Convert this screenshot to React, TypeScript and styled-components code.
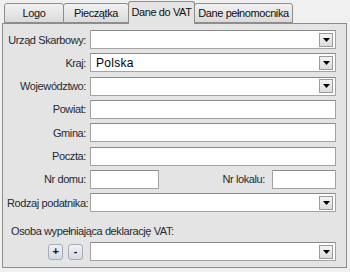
import React from 'react';
import styled, { createGlobalStyle } from 'styled-components';

const GlobalStyle = createGlobalStyle`
  html, body {
    margin: 0;
    padding: 0;
    background: #f0f0f0;
    font-family: "Liberation Sans", Arial, sans-serif;
    font-size: 11px;
    letter-spacing: -0.4px;
    color: #1e1e1e;
  }
`;

const Window = styled.div`
  width: 350px;
  height: 272px;
  box-sizing: border-box;
  padding: 1px 3px 0 2px;
  background: #f0f0f0;
  display: flex;
  flex-direction: column;
`;

const TabBar = styled.div`
  display: flex;
  align-items: flex-end;
  height: 22px;
  padding-left: 2px;
  position: relative;
  z-index: 1;
`;

const Tab = styled.div<{ $active?: boolean; $width: number }>`
  width: ${p => p.$width}px;
  box-sizing: border-box;
  height: ${p => (p.$active ? 23 : 20)}px;
  margin-bottom: ${p => (p.$active ? -1 : 0)}px;
  border: 1px solid #8d8d8d;
  border-bottom: ${p => (p.$active ? 'none' : '1px solid #8d8d8d')};
  border-radius: 3px 3px 0 0;
  background: ${p =>
    p.$active ? '#e4e4e4' : 'linear-gradient(#f2f2f2, #dadada)'};
  display: flex;
  align-items: center;
  justify-content: center;
  white-space: nowrap;
  padding-bottom: ${p => (p.$active ? 2 : 0)}px;
  color: #111;
  margin-left: -1px;
  &:first-child {
    margin-left: 0;
  }
`;

const Panel = styled.div`
  flex: none;
  height: 245px;
  box-sizing: border-box;
  border: 1px solid #8d8d8d;
  background: #e4e4e4;
  padding: 6px 10px 0 4px;
`;

const Form = styled.div`
  display: grid;
  grid-template-columns: 79px 1fr;
  column-gap: 4px;
  row-gap: 4.33px;
  align-items: center;
`;

const Label = styled.label`
  text-align: right;
  white-space: nowrap;
  color: #262a30;
`;

const Field = styled.div<{ $width?: number }>`
  height: 19px;
  box-sizing: border-box;
  width: ${p => (p.$width ? `${p.$width}px` : 'auto')};
  border: 1px solid #a3a3a3;
  border-top-color: #8a8a8a;
  background: #fff;
  display: flex;
  align-items: center;
  padding: 0 2px 0 5px;
`;

const FieldText = styled.span`
  flex: 1;
  font-size: 12px;
  letter-spacing: 0.3px;
  color: #000;
`;

const DropButton = styled.div`
  width: 14px;
  height: 14px;
  box-sizing: border-box;
  border: 1px solid #9a9a9a;
  background: linear-gradient(#f4f4f4, #dcdcdc);
  display: flex;
  align-items: center;
  justify-content: center;
`;

const SplitRow = styled.div`
  display: flex;
  align-items: center;
  justify-content: space-between;
`;

const SplitLabel = styled(Label)`
  margin-left: auto;
  margin-right: 7px;
`;

const Section = styled.div`
  margin-top: 13px;
  padding-left: 4px;
  color: #262a30;
`;

const PersonRow = styled.div`
  display: grid;
  grid-template-columns: 79px 1fr;
  column-gap: 4px;
  align-items: center;
  margin-top: 5px;
`;

const Buttons = styled.div`
  display: flex;
  justify-content: flex-end;
  gap: 5px;
  padding-right: 3px;
`;

const SmallButton = styled.div`
  width: 15px;
  height: 16px;
  box-sizing: border-box;
  border: 1px solid #a6acb5;
  border-radius: 3px;
  background: linear-gradient(#eef1f5, #d5dae2);
  display: flex;
  align-items: center;
  justify-content: center;
  font-weight: bold;
  font-size: 11px;
  color: #111;
  line-height: 1;
`;

const Arrow = () => (
  <svg width="7" height="4" viewBox="0 0 7 4">
    <path d="M0 0 H7 L3.5 4 Z" fill="#000" />
  </svg>
);

const Combo = ({ value }: { value?: string }) => (
  <Field>
    <FieldText>{value}</FieldText>
    <DropButton>
      <Arrow />
    </DropButton>
  </Field>
);

export default function App() {
  return (
    <>
      <GlobalStyle />
      <Window>
        <TabBar>
          <Tab $width={60}>Logo</Tab>
          <Tab $width={66}>Pieczątka</Tab>
          <Tab $width={67} $active>Dane do VAT</Tab>
          <Tab $width={99}>Dane pełnomocnika</Tab>
        </TabBar>
        <Panel>
          <Form>
            <Label>Urząd Skarbowy:</Label>
            <Combo />
            <Label>Kraj:</Label>
            <Combo value="Polska" />
            <Label>Województwo:</Label>
            <Combo />
            <Label>Powiat:</Label>
            <Field />
            <Label>Gmina:</Label>
            <Field />
            <Label>Poczta:</Label>
            <Field />
            <Label>Nr domu:</Label>
            <SplitRow>
              <Field $width={69} />
              <SplitLabel>Nr lokalu:</SplitLabel>
              <Field $width={64} />
            </SplitRow>
            <Label>Rodzaj podatnika:</Label>
            <Combo />
          </Form>
          <Section>Osoba wypełniająca deklarację VAT:</Section>
          <PersonRow>
            <Buttons>
              <SmallButton>+</SmallButton>
              <SmallButton>-</SmallButton>
            </Buttons>
            <Combo />
          </PersonRow>
        </Panel>
      </Window>
    </>
  );
}
